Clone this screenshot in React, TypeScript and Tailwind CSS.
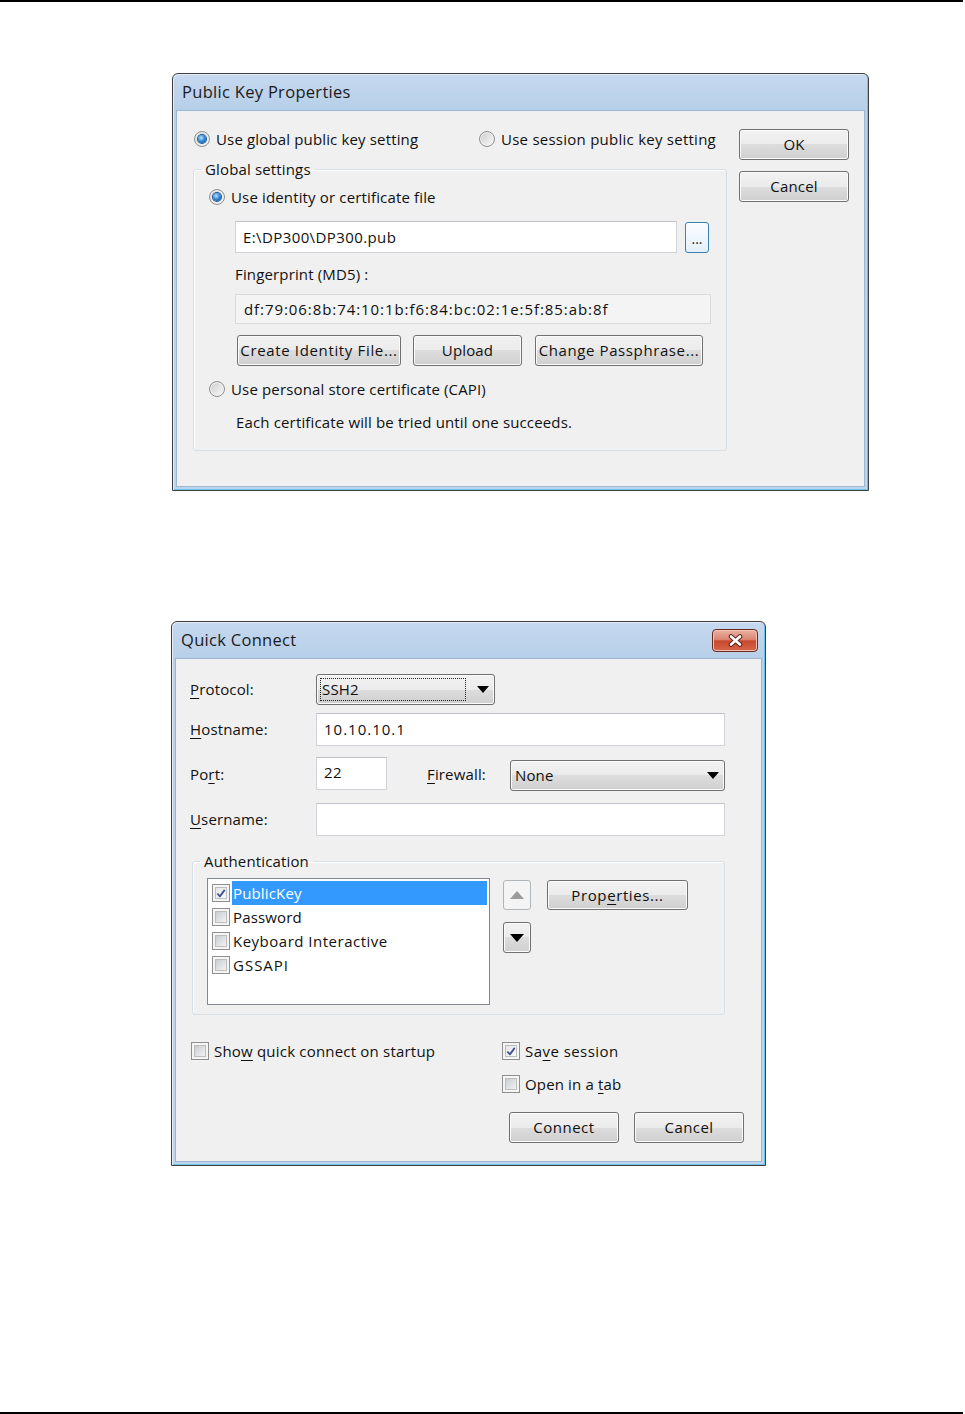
import React from "react";

const F = "font-['Open_Sans','Noto_Sans',sans-serif] tracking-[0.15px]";

function Btn({ children, className = "" }: { children: React.ReactNode; className?: string }) {
  return (
    <div
      className={`flex shrink-0 items-center justify-center whitespace-nowrap rounded-[3px] border border-[#707070] bg-[linear-gradient(#f2f2f2,#ebebeb_50%,#dddddd_50%,#cfcfcf)] text-[15px] leading-none text-[#111] shadow-[inset_0_0_0_1px_#fbfbfb] ${className}`}
    >
      {children}
    </div>
  );
}

function Radio({ checked }: { checked?: boolean }) {
  return (
    <span className="flex h-[16px] w-[16px] shrink-0 items-center justify-center rounded-full border border-[#8e8f8f] bg-[linear-gradient(135deg,#cdcdcd,#fafafa)] shadow-[inset_0_0_0_1px_#f2f2f2]">
      {checked && (
        <span className="h-[8px] w-[8px] rounded-full bg-[radial-gradient(circle_at_40%_35%,#b3e2ff,#2a7ed0_55%,#0f437c)] shadow-[0_0_0_1px_#1c5a93]" />
      )}
    </span>
  );
}

function Check({ checked }: { checked?: boolean }) {
  return (
    <span className="flex h-[18px] w-[18px] shrink-0 items-center justify-center border border-[#8f8f8f] bg-[#f5f5f5] p-[2px]">
      <span
        className={`flex h-full w-full items-center justify-center border border-[#bdbdbd] ${
          checked ? "bg-[linear-gradient(135deg,#e4e6ea,#f9f9f9)]" : "bg-[linear-gradient(135deg,#c9ccd1,#f2f2f2)]"
        }`}
      >
        {checked && (
          <svg width="11" height="11" viewBox="0 0 11 11">
            <path d="M1.5 5.5 L4.3 8.7 L9.6 1.5" fill="none" stroke="#3f5592" strokeWidth="2" strokeLinejoin="round" />
          </svg>
        )}
      </span>
    </span>
  );
}

function Field({ children, className = "" }: { children?: React.ReactNode; className?: string }) {
  return (
    <div
      className={`flex shrink-0 items-center whitespace-nowrap border border-[#d0d3d8] border-t-[#bfc3c9] bg-white pl-[7px] text-[15px] text-[#111] ${className}`}
    >
      {children}
    </div>
  );
}

function Combo({ value, focused, className = "" }: { value: string; focused?: boolean; className?: string }) {
  return (
    <div
      className={`flex shrink-0 items-center rounded-[3px] border border-[#707070] bg-[linear-gradient(#f2f2f2,#ebebeb_50%,#dddddd_50%,#cfcfcf)] pl-[3px] pr-[5px] text-[15px] text-[#111] shadow-[inset_0_0_0_1px_#fbfbfb] ${className}`}
    >
      <span
        className={`flex h-[23px] flex-1 items-center pl-[1px] ${
          focused ? "mr-[11px] border border-dotted border-[#222]" : "mr-[6px]"
        }`}
      >
        {value}
      </span>
      <svg width="12" height="7" viewBox="0 0 12 7">
        <path d="M0 0 H12 L6 7 Z" fill="#000" />
      </svg>
    </div>
  );
}

function U({ children }: { children: React.ReactNode }) {
  return <span className="underline decoration-1 underline-offset-[3px]">{children}</span>;
}

function CloseBtn() {
  return (
    <div className="flex h-[23px] w-[46px] items-center justify-center rounded-[4px] border border-[#6b2a20] bg-[linear-gradient(#eab2a3,#db8570_45%,#c8482f_52%,#d6654a)] shadow-[inset_0_0_0_1px_#f3c0b2]">
      <svg width="17" height="13" viewBox="0 0 17 13">
        <path d="M4 2.5 L13 10.5 M13 2.5 L4 10.5" stroke="#5c2419" strokeWidth="4.6" strokeLinecap="round" />
        <path d="M4 2.5 L13 10.5 M13 2.5 L4 10.5" stroke="#ffffff" strokeWidth="2.6" strokeLinecap="round" />
      </svg>
    </div>
  );
}

function Frame({
  title,
  className,
  close,
  children,
}: {
  title: string;
  className: string;
  close?: boolean;
  children: React.ReactNode;
}) {
  return (
    <div
      className={`flex flex-col rounded-t-[6px] border border-[#3f3f3f] bg-[linear-gradient(#c6d9ef,#b7cfe9_36px,#bcd4ec)] px-[3px] pb-[3px] shadow-[inset_1px_1px_0_#e4edf7,inset_-1px_-1px_0_#6cc4ea] ${className}`}
    >
      <div className="flex h-[36px] shrink-0 items-center justify-between pl-[6px] pr-[4px]">
        <span className="text-[16.5px] tracking-[0.3px] text-[#1b1b1b]">{title}</span>
        {close && <CloseBtn />}
      </div>
      <div className="flex-1 border border-[#9db6d1] bg-[#f0f0f0] text-[15px] text-[#111]">{children}</div>
    </div>
  );
}

function PublicKeyDialog() {
  return (
    <Frame title="Public Key Properties" className="h-[418px] w-[697px]">
      <div className="flex pl-[16px] pt-[18px]">
        <div className="w-[534px]">
          <div className="flex h-[20px] items-center">
            <div className="flex w-[286px] items-center gap-[6px] pl-[1px]">
              <Radio checked />
              <span>Use global public key setting</span>
            </div>
            <div className="flex items-center gap-[6px]">
              <Radio />
              <span className="tracking-[0.25px]">Use session public key setting</span>
            </div>
          </div>
          <fieldset className="mt-[10px] rounded-[3px] border border-[#d5dfe5] shadow-[inset_1px_1px_0_#fff]">
            <legend className="ml-[7px] h-[20px] px-[4px] leading-[20px]">Global settings</legend>
            <div className="pb-[18px] pt-[8px]">
              <div className="flex h-[20px] items-center gap-[6px] pl-[15px]">
                <Radio checked />
                <span>Use identity or certificate file</span>
              </div>
              <div className="mt-[14px] flex items-start gap-[8px] pl-[41px]">
                <Field className="h-[32px] w-[442px] tracking-[0.4px]">E:\DP300\DP300.pub</Field>
                <div className="mt-[1px] flex h-[31px] w-[24px] items-end justify-center rounded-[3px] border border-[#3c7fb1] bg-[linear-gradient(#fbfdff,#e3f1fc)] pb-[6px] text-[14px] leading-none tracking-[0px] text-[#222]">
                  ...
                </div>
              </div>
              <div className="mt-[11px] flex h-[20px] items-center pl-[41px]">Fingerprint (MD5) :</div>
              <div className="ml-[41px] mt-[10px] flex h-[30px] w-[476px] items-center whitespace-nowrap border border-[#dadada] bg-[#f4f4f4] pl-[8px] tracking-[0.93px]">
                df:79:06:8b:74:10:1b:f6:84:bc:02:1e:5f:85:ab:8f
              </div>
              <div className="mt-[11px] flex pl-[43px]">
                <Btn className="h-[31px] w-[164px] tracking-[0.65px]">Create Identity File...</Btn>
                <Btn className="ml-[12px] h-[31px] w-[109px]">Upload</Btn>
                <Btn className="ml-[13px] h-[31px] w-[168px] tracking-[0.6px]">Change Passphrase...</Btn>
              </div>
              <div className="mt-[13px] flex h-[20px] items-center gap-[6px] pl-[15px]">
                <Radio />
                <span>Use personal store certificate (CAPI)</span>
              </div>
              <div className="mt-[13px] flex h-[20px] items-center pl-[42px]">
                Each certificate will be tried until one succeeds.
              </div>
            </div>
          </fieldset>
        </div>
        <div className="ml-[12px] flex flex-col">
          <Btn className="h-[31px] w-[110px]">OK</Btn>
          <Btn className="mt-[11px] h-[31px] w-[110px]">Cancel</Btn>
        </div>
      </div>
    </Frame>
  );
}

function QuickConnect() {
  const items = ["PublicKey", "Password", "Keyboard Interactive", "GSSAPI"];
  return (
    <Frame title="Quick Connect" className="h-[545px] w-[595px]" close>
      <div className="pl-[14px] pt-[15px]">
        <div className="flex h-[31px] items-center">
          <span className="w-[126px]">
            <U>P</U>rotocol:
          </span>
          <Combo value="SSH2" focused className="h-[31px] w-[179px]" />
        </div>
        <div className="mt-[8px] flex h-[33px] items-center">
          <span className="w-[126px]">
            <U>H</U>ostname:
          </span>
          <Field className="h-[33px] w-[409px] tracking-[1px]">10.10.10.1</Field>
        </div>
        <div className="mt-[11px] flex h-[34px] items-start">
          <span className="flex h-[34px] w-[126px] items-center">
            Po<U>r</U>t:
          </span>
          <Field className="h-[33px] w-[71px] pb-[2px] tracking-[0.5px]">22</Field>
          <span className="ml-[40px] flex h-[34px] w-[83px] items-center">
            <U>F</U>irewall:
          </span>
          <Combo value="None" className="mt-[3px] h-[31px] w-[215px]" />
        </div>
        <div className="mt-[12px] flex h-[33px] items-center">
          <span className="w-[126px]">
            <U>U</U>sername:
          </span>
          <Field className="h-[33px] w-[409px]" />
        </div>
        <fieldset className="ml-[2px] mt-[15px] w-[533px] rounded-[3px] border border-[#d5dfe5] shadow-[inset_1px_1px_0_#fff]">
          <legend className="ml-[7px] h-[20px] px-[4px] leading-[20px]">Authentication</legend>
          <div className="flex items-start pb-[9px] pl-[14px] pt-[7px]">
            <div className="h-[127px] w-[283px] border border-[#828790] bg-white pl-[4px] pt-[2px]">
              {items.map((it, i) => (
                <div key={it} className="flex h-[24px] items-center">
                  <Check checked={i === 0} />
                  <span
                    className={`ml-[2px] mr-[2px] flex h-full flex-1 items-center pl-[1px] ${
                      i === 0 ? "bg-[#3399ff] text-white" : ""
                    } ${i === 2 ? "tracking-[0.5px]" : ""} ${i === 3 ? "tracking-[1px]" : ""}`}
                  >
                    {it}
                  </span>
                </div>
              ))}
            </div>
            <div className="ml-[13px] mt-[2px] flex flex-col">
              <div className="flex h-[30px] w-[28px] items-center justify-center rounded-[3px] border border-[#b0b5b9] bg-[#f4f4f4]">
                <svg width="14" height="8" viewBox="0 0 14 8">
                  <path d="M0 8 H14 L7 0 Z" fill="#9c9c9c" />
                </svg>
              </div>
              <Btn className="mt-[12px] h-[31px] w-[28px]">
                <svg width="14" height="8" viewBox="0 0 14 8">
                  <path d="M0 0 H14 L7 8 Z" fill="#000" />
                </svg>
              </Btn>
            </div>
            <Btn className="ml-[16px] mt-[2px] h-[30px] w-[141px] tracking-[0.6px]">
              Prop<U>e</U>rties...
            </Btn>
          </div>
        </fieldset>
        <div className="mt-[26px] flex h-[20px] items-center">
          <div className="flex w-[312px] items-center gap-[5px] pl-[1px]">
            <Check />
            <span className="tracking-[0.2px]">
              Sho<U>w</U> quick connect on startup
            </span>
          </div>
          <div className="flex items-center gap-[5px]">
            <Check checked />
            <span className="tracking-[0.45px]">
              Sa<U>v</U>e session
            </span>
          </div>
        </div>
        <div className="mt-[13px] flex h-[20px] items-center pl-[312px]">
          <div className="flex items-center gap-[5px]">
            <Check />
            <span>
              Open in a <U>t</U>ab
            </span>
          </div>
        </div>
        <div className="mt-[18px] flex pl-[319px]">
          <Btn className="h-[31px] w-[110px] tracking-[0.5px]">Connect</Btn>
          <Btn className="ml-[15px] h-[31px] w-[110px] tracking-[0.4px]">Cancel</Btn>
        </div>
      </div>
    </Frame>
  );
}

export default function App() {
  return (
    <div className={`flex h-[1414px] w-[965px] flex-col bg-white ${F}`}>
      <div className="h-[2px] w-[963px] shrink-0 bg-black" />
      <div className="ml-[172px] mt-[71px]">
        <PublicKeyDialog />
      </div>
      <div className="ml-[171px] mt-[130px]">
        <QuickConnect />
      </div>
      <div className="mt-auto h-[2px] w-[963px] shrink-0 bg-black" />
    </div>
  );
}
